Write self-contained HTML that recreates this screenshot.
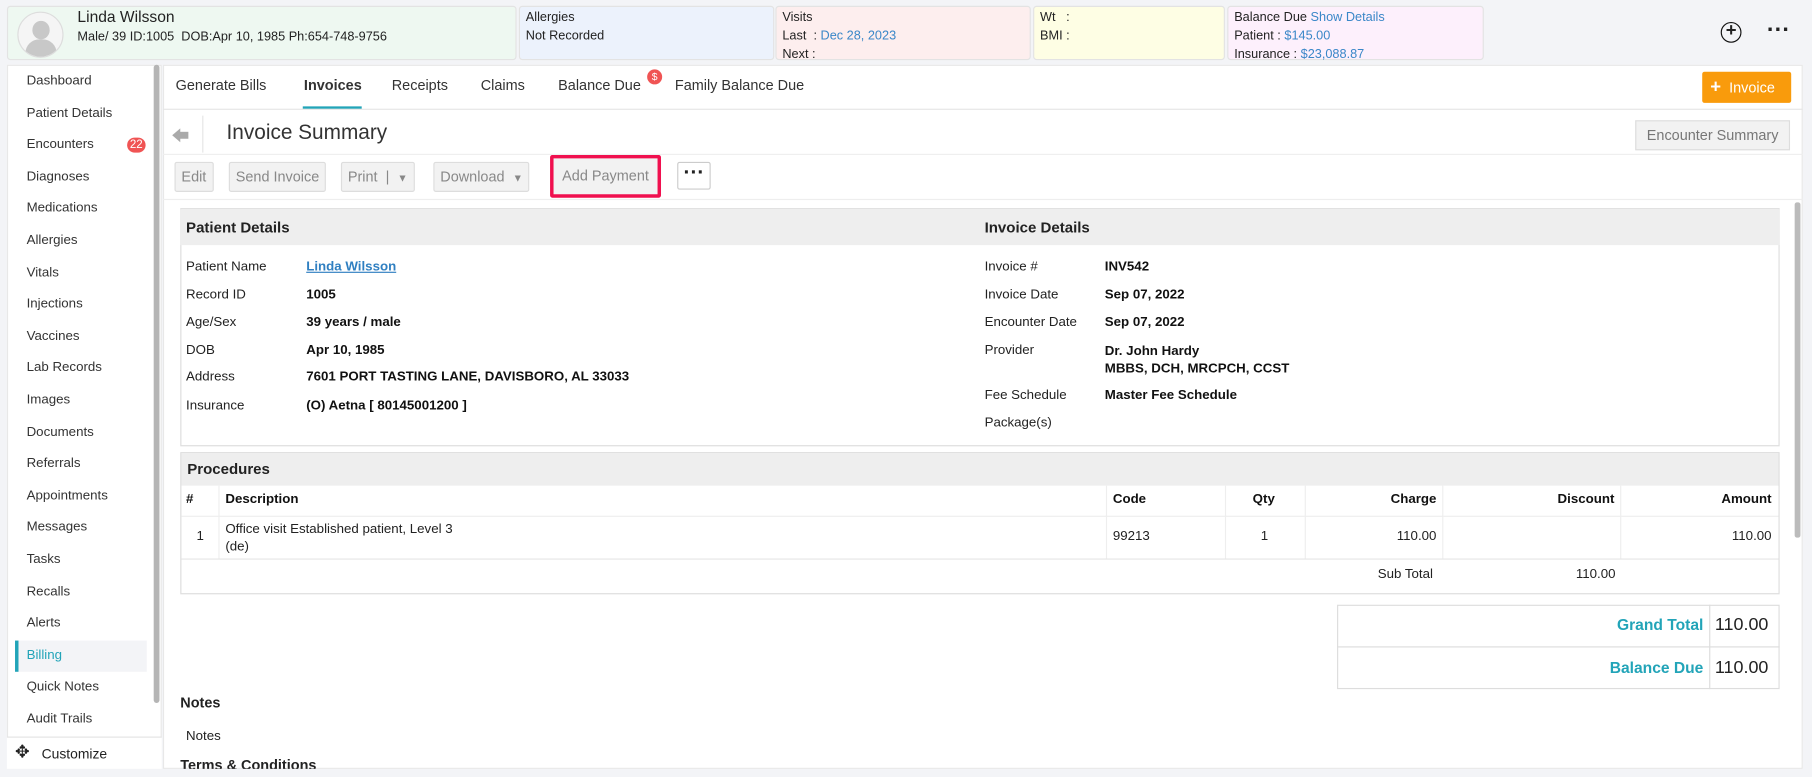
<!DOCTYPE html>
<html><head><meta charset="utf-8"><style>
*{box-sizing:border-box;margin:0;padding:0}
html,body{width:1812px;height:777px;overflow:hidden;background:#f3f4f7}
#w{position:absolute;left:0;top:0;width:1568px;height:672px;transform:scale(1.15561,1.15625);transform-origin:0 0;font-family:"Liberation Sans",sans-serif;font-size:12px;color:#222}
.a{position:absolute;white-space:nowrap}
.box{position:absolute;top:5px;height:47px;border:1px solid #e3e3e3;border-radius:3px;padding:1px 5px;line-height:16px;font-size:11px}
.lnk{color:#3a87c8}
.side div{height:27.6px;line-height:26px;padding-left:16px;font-size:11.5px;color:#333}
.tab{position:absolute;top:67px;font-size:12.5px;color:#333;white-space:nowrap}
.btn{position:absolute;top:140px;height:26px;line-height:24px;border:1px solid #ddd;background:#f2f2f2;color:#888;font-size:12.5px;padding:0 5px;border-radius:2px;white-space:nowrap}
.lab{position:absolute;font-size:11.5px;color:#222;white-space:nowrap}
.val{position:absolute;font-size:11.5px;font-weight:bold;color:#111;white-space:nowrap}
.hd{position:absolute;background:#eee;font-weight:bold;font-size:13px;padding-left:5px}
</style></head><body><div id="w">
<div class="a" style="left:0;top:0;width:1568px;height:55px;background:#f3f4f7"></div>
<div class="box" style="left:6px;width:441px;background:#eef8f1;padding:0">
 <div class="a" style="left:8px;top:4px;width:40px;height:40px;border-radius:50%;border:1px solid #ddd;background:#f5f5f5;overflow:hidden">
  <div class="a" style="left:12px;top:7px;width:15px;height:16px;border-radius:50%;background:#c8c8c8"></div>
  <div class="a" style="left:6px;top:23px;width:27px;height:20px;border-radius:12px 12px 0 0;background:#c8c8c8"></div></div>
 <div class="a" style="left:60px;top:1px;font-size:13.5px">Linda Wilsson</div>
 <div class="a" style="left:60px;top:18px;font-size:11px">Male/ 39 ID:1005 &nbsp;DOB:Apr 10, 1985 Ph:654-748-9756</div>
</div>
<div class="box" style="left:449px;width:221px;background:#ecf2fc">Allergies<br>Not Recorded</div>
<div class="box" style="left:671px;width:221px;background:#fdeeee">Visits<br>Last &nbsp;: <span class="lnk">Dec 28, 2023</span><br>Next :</div>
<div class="box" style="left:894px;width:166px;background:#fefee4">Wt &nbsp;&nbsp;:<br>BMI :</div>
<div class="box" style="left:1062px;width:222px;background:#fdf0fc">Balance Due <span class="lnk">Show Details</span><br>Patient : <span class="lnk">$145.00</span><br>Insurance : <span class="lnk">$23,088.87</span></div>
<div class="a" style="left:1489px;top:19px;width:18px;height:18px;border:1.5px solid #111;border-radius:50%;text-align:center;line-height:14px;font-size:16px;font-weight:bold">+</div>
<div class="a" style="left:1529px;top:21px;font-size:20px;font-weight:bold;line-height:10px">···</div>
<div class="a side" style="left:6px;top:56px;width:134px;height:609px;background:#fff;border:1px solid #e8e8e8">
<div>Dashboard</div><div>Patient Details</div><div>Encounters <span style="display:inline-block;margin-left:26px;background:#f05454;color:#fff;border-radius:8px;font-size:10px;line-height:13px;padding:0 2px">22</span></div><div>Diagnoses</div><div>Medications</div><div>Allergies</div><div>Vitals</div><div>Injections</div><div>Vaccines</div><div>Lab Records</div><div>Images</div><div>Documents</div><div>Referrals</div><div>Appointments</div><div>Messages</div><div>Tasks</div><div>Recalls</div><div>Alerts</div><div style="background:#f3f4f7;border-left:3px solid #22a4b8;color:#22a4b8;margin-left:6px;width:114px;padding-left:7px">Billing</div><div>Quick Notes</div><div>Audit Trails</div>
</div>
<div class="a" style="left:133px;top:56px;width:5px;height:552px;background:#b5b5b5;border-radius:3px"></div>
<div class="a" style="left:6px;top:637px;width:134px;height:28px;background:#fff;border-top:1px solid #e3e3e3;font-size:12px;line-height:28px;padding-left:30px">Customize</div>
<div class="a" style="left:13px;top:643px;font-size:15px;line-height:16px">✥</div>
<div class="a" style="left:141px;top:56px;width:1419px;height:609px;background:#fff;border:1px solid #e8e8e8"></div>
<div class="a" style="left:141px;top:94px;width:1419px;height:1px;background:#e5e5e5"></div>
<div class="tab" style="left:152px">Generate Bills</div>
<div class="tab" style="left:263px;font-weight:bold">Invoices</div>
<div class="a" style="left:262px;top:92px;width:51px;height:2px;background:#22a4b8"></div>
<div class="tab" style="left:339px">Receipts</div>
<div class="tab" style="left:416px">Claims</div>
<div class="tab" style="left:483px">Balance Due</div>
<div class="a" style="left:560px;top:60px;width:13px;height:13px;border-radius:50%;background:#f05454;color:#fff;font-size:9px;text-align:center;line-height:13px">$</div>
<div class="tab" style="left:584px">Family Balance Due</div>
<div class="a" style="left:1473px;top:62px;width:77px;height:27px;background:#f99b0c;border-radius:2px;color:#fff;font-size:12.5px;line-height:27px;padding-left:7px"><b style="font-size:16px">+</b>&nbsp; Invoice</div>
<div class="a" style="left:149px;top:111px;width:0;height:0;border-top:6px solid transparent;border-bottom:6px solid transparent;border-right:7px solid #aaa"></div>
<div class="a" style="left:155px;top:114px;width:8px;height:6px;background:#aaa"></div>
<div class="a" style="left:175px;top:100px;width:1px;height:32px;background:#e5e5e5"></div>
<div class="a" style="left:196px;top:104px;font-size:18px;color:#333">Invoice Summary</div>
<div class="a" style="left:1415px;top:104px;width:134px;height:26px;border:1px solid #ddd;background:#f2f2f2;color:#777;font-size:12.5px;line-height:24px;text-align:center">Encounter Summary</div>
<div class="a" style="left:141px;top:133px;width:1419px;height:1px;background:#eee"></div>
<div class="btn" style="left:151px">Edit</div>
<div class="btn" style="left:198px">Send Invoice</div>
<div class="btn" style="left:295px">Print &nbsp;| &nbsp;<span style="font-size:9px">▼</span></div>
<div class="btn" style="left:375px">Download &nbsp;<span style="font-size:9px">▼</span></div>
<div class="btn" style="left:476px;width:96px;top:134px;height:37px;border:3px solid #f0104f;line-height:31px;padding:0 4px;text-align:center">Add Payment</div>
<div class="a" style="left:586px;top:140px;width:29px;height:24px;border:1px solid #ccc;border-radius:2px;text-align:center;font-weight:bold;line-height:16px;font-size:18px">···</div>
<div class="a" style="left:141px;top:172px;width:1419px;height:1px;background:#eee"></div>
<div class="a" style="left:1553px;top:175px;width:5px;height:290px;background:#bbb;border-radius:2px"></div>
<div class="a" style="left:156px;top:180px;width:1384px;height:206px;border:1px solid #ddd"></div>
<div class="hd" style="left:156px;top:181px;width:1384px;height:31px;line-height:32px">Patient Details</div>
<div class="a" style="left:852px;top:181px;font-weight:bold;font-size:13px;line-height:32px">Invoice Details</div>
<div class="lab" style="left:161px;top:225px">Patient Name</div><div class="val" style="left:265px;top:225px;color:#2f7fc1;text-decoration:underline">Linda Wilsson</div>
<div class="lab" style="left:161px;top:249px">Record ID</div><div class="val" style="left:265px;top:249px">1005</div>
<div class="lab" style="left:161px;top:273px">Age/Sex</div><div class="val" style="left:265px;top:273px">39 years / male</div>
<div class="lab" style="left:161px;top:297px">DOB</div><div class="val" style="left:265px;top:297px">Apr 10, 1985</div>
<div class="lab" style="left:161px;top:320px">Address</div><div class="val" style="left:265px;top:320px">7601 PORT TASTING LANE, DAVISBORO, AL 33033</div>
<div class="lab" style="left:161px;top:345px">Insurance</div><div class="val" style="left:265px;top:345px">(O) Aetna [ 80145001200 ]</div>
<div class="lab" style="left:852px;top:225px">Invoice #</div><div class="val" style="left:956px;top:225px">INV542</div>
<div class="lab" style="left:852px;top:249px">Invoice Date</div><div class="val" style="left:956px;top:249px">Sep 07, 2022</div>
<div class="lab" style="left:852px;top:273px">Encounter Date</div><div class="val" style="left:956px;top:273px">Sep 07, 2022</div>
<div class="lab" style="left:852px;top:297px">Provider</div><div class="val" style="left:956px;top:297px;line-height:15px">Dr. John Hardy<br>MBBS, DCH, MRCPCH, CCST</div>
<div class="lab" style="left:852px;top:336px">Fee Schedule</div><div class="val" style="left:956px;top:336px">Master Fee Schedule</div>
<div class="lab" style="left:852px;top:360px">Package(s)</div>
<div class="a" style="left:156px;top:391px;width:1384px;height:123px;border:1px solid #ddd"></div>
<div class="hd" style="left:157px;top:392px;width:1382px;height:28px;line-height:28px">Procedures</div>
<div class="a" style="left:157px;top:446px;width:1382px;height:1px;background:#eee"></div>
<div class="a" style="left:157px;top:483px;width:1382px;height:1px;background:#e5e5e5"></div>
<div class="a" style="left:189px;top:420px;width:1px;height:63px;background:#eee"></div>
<div class="a" style="left:957px;top:420px;width:1px;height:63px;background:#eee"></div>
<div class="a" style="left:1060px;top:420px;width:1px;height:63px;background:#eee"></div>
<div class="a" style="left:1129px;top:420px;width:1px;height:63px;background:#eee"></div>
<div class="a" style="left:1248px;top:420px;width:1px;height:63px;background:#eee"></div>
<div class="a" style="left:1402px;top:420px;width:1px;height:63px;background:#eee"></div>
<div class="val" style="left:161px;top:426px">#</div>
<div class="val" style="left:195px;top:426px">Description</div>
<div class="val" style="left:963px;top:426px">Code</div>
<div class="val" style="left:1084px;top:426px">Qty</div>
<div class="val" style="left:1130px;top:426px;width:113px;text-align:right">Charge</div>
<div class="val" style="left:1250px;top:426px;width:147px;text-align:right">Discount</div>
<div class="val" style="left:1404px;top:426px;width:129px;text-align:right">Amount</div>
<div class="lab" style="left:170px;top:458px">1</div>
<div class="lab" style="left:195px;top:451px;line-height:15px">Office visit Established patient, Level 3<br>(de)</div>
<div class="lab" style="left:963px;top:458px">99213</div>
<div class="lab" style="left:1091px;top:458px">1</div>
<div class="lab" style="left:1130px;top:458px;width:113px;text-align:right">110.00</div>
<div class="lab" style="left:1404px;top:458px;width:129px;text-align:right">110.00</div>
<div class="lab" style="left:1130px;top:491px;width:110px;text-align:right">Sub Total</div>
<div class="lab" style="left:1250px;top:491px;width:148px;text-align:right">110.00</div>
<div class="a" style="left:1157px;top:523px;width:383px;height:73px;border:1px solid #ddd"></div>
<div class="a" style="left:1157px;top:559px;width:383px;height:1px;background:#ddd"></div>
<div class="a" style="left:1479px;top:523px;width:1px;height:73px;background:#ddd"></div>
<div class="a" style="left:1300px;top:533px;width:174px;text-align:right;color:#22a4b8;font-weight:bold;font-size:13.5px">Grand Total</div>
<div class="a" style="left:1484px;top:532px;font-size:15.5px">110.00</div>
<div class="a" style="left:1300px;top:570px;width:174px;text-align:right;color:#22a4b8;font-weight:bold;font-size:13.5px">Balance Due</div>
<div class="a" style="left:1484px;top:569px;font-size:15.5px">110.00</div>
<div class="a" style="left:156px;top:601px;font-weight:bold;font-size:12.5px">Notes</div>
<div class="a" style="left:161px;top:631px;font-size:11.5px">Notes</div>
<div class="a" style="left:156px;top:655px;font-weight:bold;font-size:12.5px;height:10px;overflow:hidden">Terms &amp; Conditions</div>
</div></body></html>
